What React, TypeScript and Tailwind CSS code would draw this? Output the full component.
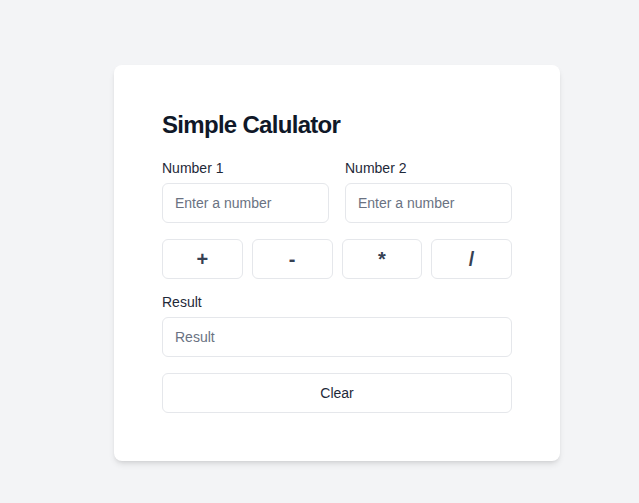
import { useState } from 'react'

const ops = ['+', '-', '*', '/']

export default function App() {
  const [a, setA] = useState('')
  const [b, setB] = useState('')
  const [result, setResult] = useState('')

  const calc = (op: string) => {
    const x = parseFloat(a)
    const y = parseFloat(b)
    if (isNaN(x) || isNaN(y)) return
    const r = op === '+' ? x + y : op === '-' ? x - y : op === '*' ? x * y : x / y
    setResult(String(r))
  }

  return (
    <div className="min-h-screen bg-gray-100 pt-[65px] pl-[114px] font-['Liberation_Sans',Arial,sans-serif]">
      <div className="w-[446px] bg-white rounded-lg shadow-md p-12">
        <h1 className="text-2xl leading-none font-bold tracking-[-0.7px] text-gray-900 mb-[21px]">Simple Calulator</h1>

        <div className="grid grid-cols-2 gap-4">
          <div>
            <label className="block text-sm text-gray-800 mb-[5px]">Number 1</label>
            <input
              value={a}
              onChange={e => setA(e.target.value)}
              placeholder="Enter a number"
              className="w-full h-10 px-3 text-sm border border-gray-200 rounded-md placeholder:text-gray-500 outline-none"
            />
          </div>
          <div>
            <label className="block text-sm text-gray-800 mb-[5px]">Number 2</label>
            <input
              value={b}
              onChange={e => setB(e.target.value)}
              placeholder="Enter a number"
              className="w-full h-10 px-3 text-sm border border-gray-200 rounded-md placeholder:text-gray-500 outline-none"
            />
          </div>
        </div>

        <div className="grid grid-cols-4 gap-[9px] mt-4">
          {ops.map(op => (
            <button
              key={op}
              onClick={() => calc(op)}
              className="h-10 border border-gray-200 rounded-md text-xl font-bold text-gray-700 bg-white"
            >
              {op}
            </button>
          ))}
        </div>

        <label className="block text-sm text-gray-800 mt-[13px] mb-[5px]">Result</label>
        <input
          value={result}
          readOnly
          placeholder="Result"
          className="w-full h-10 px-3 text-sm border border-gray-200 rounded-md placeholder:text-gray-500 outline-none"
        />

        <button
          onClick={() => { setA(''); setB(''); setResult('') }}
          className="w-full h-10 mt-4 border border-gray-200 rounded-md text-sm text-gray-800 bg-white"
        >
          Clear
        </button>
      </div>
    </div>
  )
}
